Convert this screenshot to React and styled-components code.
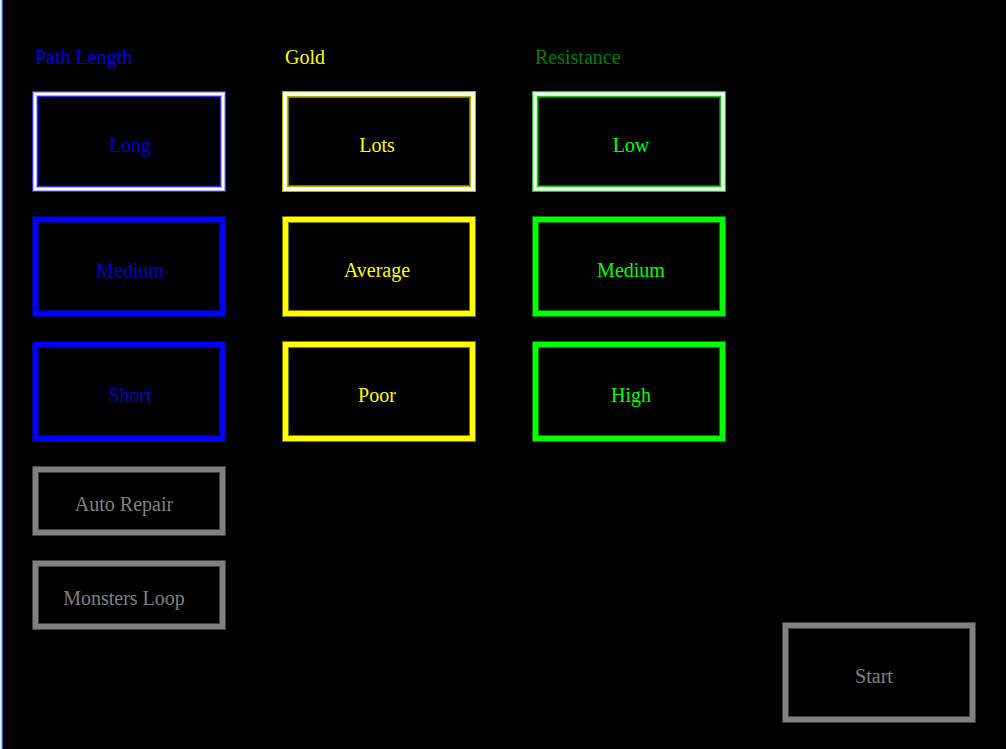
import React from "react";
import styled, { createGlobalStyle, css } from "styled-components";

const GlobalStyle = createGlobalStyle`
  *, *::before, *::after { box-sizing: border-box; }
  html, body { margin: 0; background: #000; }
`;

const tones = {
  blue: { title: "#0000e0", text: "#0000d0", line: "#0000ff", edge: "#000078", glow: "#b0b0ff", rim: "#3030e0", pad: "6px 0 0 2px" },
  gold: { title: "#ffff00", text: "#ffff00", line: "#ffff00", edge: "#787800", glow: "#ffffc0", rim: "#b0b000", pad: "6px 4px 0 0" },
  green: { title: "#008000", text: "#00ff00", line: "#00ff00", edge: "#007800", glow: "#b0ffb0", rim: "#20c020", pad: "6px 0 0 4px" },
  grey: { title: "#808080", text: "#808080", line: "#808080", edge: "#404040", glow: "#c8c8c8", rim: "#606060", pad: "6px 10px 0 0" },
};

const Screen = styled.form`
  min-height: 100vh;
  display: grid;
  grid-template-columns: repeat(4, 194px);
  justify-content: space-between;
  padding: 45px 30px 26px 29px;
  border: 0 solid #2860c8;
  border-left-width: 3px;
  border-image: linear-gradient(to right, #f0f6ff 0 1px, #a8c8f8 1px 2px, #2860c8 2px) 3;
  background: #000;
  font: 20px/24px "Liberation Serif", "Times New Roman", serif;
`;

const Column = styled.div`
  display: flex;
  flex-direction: column;
  gap: 24px;
`;

const Group = styled.section`
  display: flex;
  flex-direction: column;
  gap: 24px;
`;

const Title = styled.h2`
  margin: 0 0 -2px;
  padding-left: 3px;
  font: inherit;
  color: ${(p) => tones[p.$tone].title};
`;

const frame = css`
  display: flex;
  align-items: center;
  justify-content: center;
  height: ${(p) => (p.$short ? 70 : 101)}px;
  padding: ${(p) => tones[p.$tone].pad};
  border: 1px solid ${(p) => tones[p.$tone].edge};
  background: #000;
  color: ${(p) => tones[p.$tone].text};
  font: inherit;
  cursor: pointer;
  box-shadow:
    inset 0 0 0 5px ${(p) => tones[p.$tone].line},
    inset 0 0 0 6px ${(p) => tones[p.$tone].edge};
`;

const OptionBox = styled.label`
  ${frame}
  position: relative;

  &:has(input:checked) {
    border-color: ${(p) => tones[p.$tone].rim};
    box-shadow:
      inset 0 0 0 1px ${(p) => tones[p.$tone].glow},
      inset 0 0 0 3px #fff,
      inset 0 0 0 4px ${(p) => tones[p.$tone].glow},
      inset 0 0 0 5px ${(p) => tones[p.$tone].rim},
      inset 0 0 0 6px ${(p) => tones[p.$tone].edge};
  }
`;

const HiddenInput = styled.input`
  position: absolute;
  inset: 0;
  width: 100%;
  height: 100%;
  margin: 0;
  opacity: 0;
  cursor: pointer;
`;

const StartButton = styled.button`
  ${frame}
  margin-top: auto;
`;

const groups = [
  { name: "path", title: "Path Length", tone: "blue", options: ["Long", "Medium", "Short"] },
  { name: "gold", title: "Gold", tone: "gold", options: ["Lots", "Average", "Poor"] },
  { name: "resistance", title: "Resistance", tone: "green", options: ["Low", "Medium", "High"] },
];

const toggles = ["Auto Repair", "Monsters Loop"];

function OptionGroup({ name, title, tone, options }) {
  return (
    <Group role="radiogroup" aria-labelledby={`${name}-title`}>
      <Title id={`${name}-title`} $tone={tone}>{title}</Title>
      {options.map((option, i) => (
        <OptionBox key={option} $tone={tone}>
          <HiddenInput type="radio" name={name} value={option} defaultChecked={i === 0} />
          {option}
        </OptionBox>
      ))}
    </Group>
  );
}

export default function App() {
  return (
    <>
      <GlobalStyle />
      <Screen onSubmit={(e) => e.preventDefault()}>
        {groups.map((group, i) => (
          <Column key={group.name}>
            <OptionGroup {...group} />
            {i === 0 &&
              toggles.map((label) => (
                <OptionBox key={label} $tone="grey" $short>
                  <HiddenInput type="checkbox" name={label} />
                  {label}
                </OptionBox>
              ))}
          </Column>
        ))}
        <Column>
          <StartButton type="submit" $tone="grey">Start</StartButton>
        </Column>
      </Screen>
    </>
  );
}
